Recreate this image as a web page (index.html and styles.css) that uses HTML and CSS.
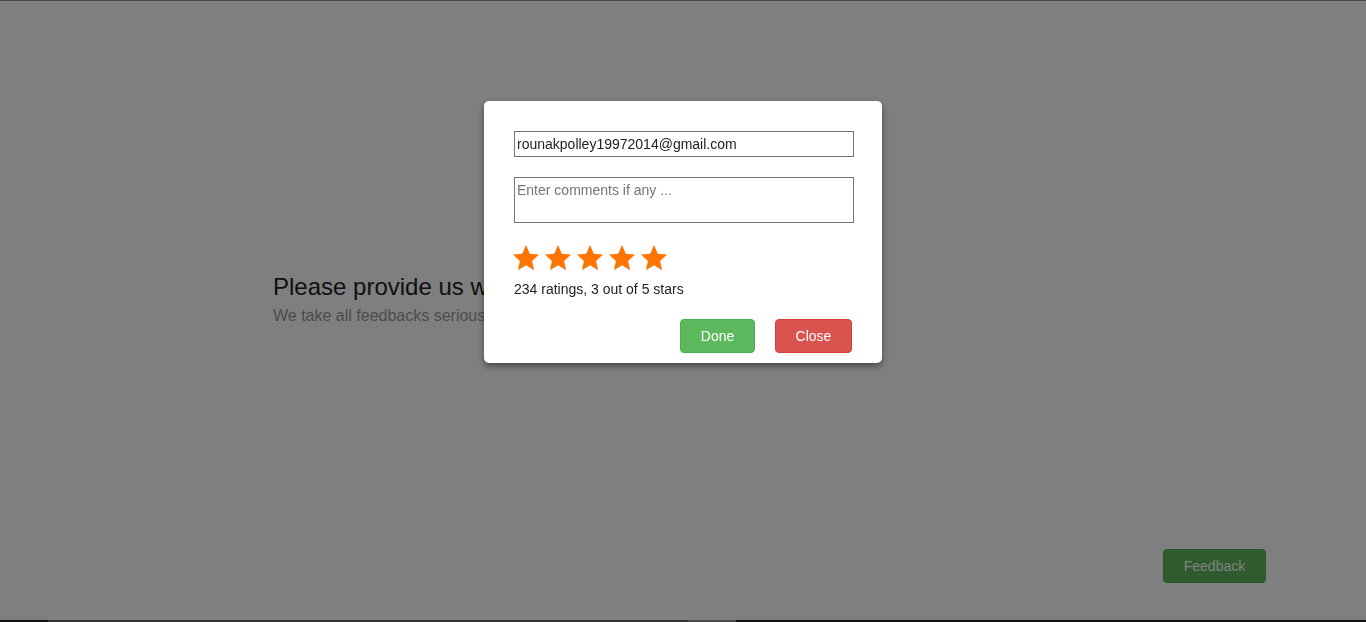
FILE: index.html
```html
<!DOCTYPE html>
<html>
<head>
    <meta name="viewport" content="width=device-width">
    <title>Feedback</title>
    <link rel="stylesheet" href="styles.css">
</head>
<body>

<div class="page">
    <div class="intro">
        <h2 class="intro-title">Please provide us with your feedback</h2>
        <p class="intro-text">We take all feedbacks seriously</p>
    </div>
    <button class="feedback-button">Feedback</button>
</div>
<div class="scrollbar"><span class="thumb"></span><span class="thumb-end"></span></div>

<div class="overlay">
    <div class="modal">
        <input class="field" type="text" value="rounakpolley19972014@gmail.com">
        <textarea class="field comments" placeholder="Enter comments if any ..."></textarea>

        <div class="stars">
            <svg viewBox="2 2 20 19.1" width="26" height="25"><path d="M12 2l2.9 6.6L22 9.27l-5.3 4.9 1.5 7.1L12 17.6l-6.2 3.7 1.5-7.1L2 9.27l7.1-.67L12 2z"/></svg>
            <svg viewBox="2 2 20 19.1" width="26" height="25"><path d="M12 2l2.9 6.6L22 9.27l-5.3 4.9 1.5 7.1L12 17.6l-6.2 3.7 1.5-7.1L2 9.27l7.1-.67L12 2z"/></svg>
            <svg viewBox="2 2 20 19.1" width="26" height="25"><path d="M12 2l2.9 6.6L22 9.27l-5.3 4.9 1.5 7.1L12 17.6l-6.2 3.7 1.5-7.1L2 9.27l7.1-.67L12 2z"/></svg>
            <svg viewBox="2 2 20 19.1" width="26" height="25"><path d="M12 2l2.9 6.6L22 9.27l-5.3 4.9 1.5 7.1L12 17.6l-6.2 3.7 1.5-7.1L2 9.27l7.1-.67L12 2z"/></svg>
            <svg viewBox="2 2 20 19.1" width="26" height="25"><path d="M12 2l2.9 6.6L22 9.27l-5.3 4.9 1.5 7.1L12 17.6l-6.2 3.7 1.5-7.1L2 9.27l7.1-.67L12 2z"/></svg>
        </div>
        <div class="rating-text">234 ratings, 3 out of 5 stars</div>

        <div class="actions">
            <button class="btn btn-done">Done</button>
            <button class="btn btn-close">Close</button>
        </div>
    </div>
</div>

</body>
</html>
```

FILE: styles.css
```css
body {
    margin: 0;
    padding: 0;
    overflow: hidden;
    background: #fff;
    font-family: "Liberation Sans", Arial, sans-serif;
}

.page {
    height: 619px;
    border-top: 1px solid #888;
    display: flex;
    flex-direction: column;
}

.intro {
    width: 820px;
    margin: 0 auto;
    padding-top: 271px;
}

.intro-title {
    margin: 0;
    font-size: 24px;
    font-weight: normal;
    color: #222;
    line-height: 30px;
}

.intro-text {
    margin: 3px 0 0;
    font-size: 16px;
    color: #999;
    line-height: 22px;
}

.feedback-button {
    margin: auto 100px 37px auto;
    width: 103px;
    height: 34px;
    background: #5cb85c;
    border: 1px solid #4cae4c;
    border-radius: 4px;
    color: #fff;
    font-family: inherit;
    font-size: 14px;
}

.scrollbar {
    height: 2px;
    background: #222;
    display: flex;
}

.thumb {
    margin-left: 48px;
    width: 640px;
    background: #666;
}

.thumb-end {
    width: 48px;
    background: #999;
}

/* dark backdrop + dialog */
.overlay {
    position: fixed;
    top: 0;
    left: 0;
    right: 0;
    bottom: 0;
    background: rgba(0, 0, 0, 0.5);
    display: flex;
    justify-content: center;
    align-items: flex-start;
}

.modal {
    margin-top: 101px;
    width: 398px;
    box-sizing: border-box;
    padding: 30px 28px 10px 30px;
    background: #fff;
    border-radius: 5px;
    box-shadow: 0 3px 6px rgba(0, 0, 0, 0.45);
}

.field {
    display: block;
    width: 340px;
    height: 26px;
    box-sizing: border-box;
    margin: 0;
    padding: 1px 2px;
    border: 1px solid #767676;
    font-family: inherit;
    font-size: 14px;
    color: #222;
}

.comments {
    margin-top: 20px;
    height: 46px;
    resize: none;
    padding: 4px 2px;
}

.comments::placeholder {
    color: #757575;
}

.stars {
    display: flex;
    gap: 6px;
    margin-top: 22px;
    margin-left: -1px;
}

.stars svg {
    fill: #ff7300;
}

.rating-text {
    margin-top: 10px;
    font-size: 14px;
    color: #222;
    line-height: 18px;
}

.actions {
    display: flex;
    justify-content: flex-end;
    gap: 20px;
    margin-top: 21px;
    margin-right: 2px;
}

.btn {
    height: 34px;
    border-radius: 4px;
    color: #fff;
    font-family: inherit;
    font-size: 14px;
    cursor: pointer;
}

.btn-done {
    width: 75px;
    background: #5cb85c;
    border: 1px solid #4cae4c;
}

.btn-close {
    width: 77px;
    background: #d9534f;
    border: 1px solid #d43f3a;
}
```
